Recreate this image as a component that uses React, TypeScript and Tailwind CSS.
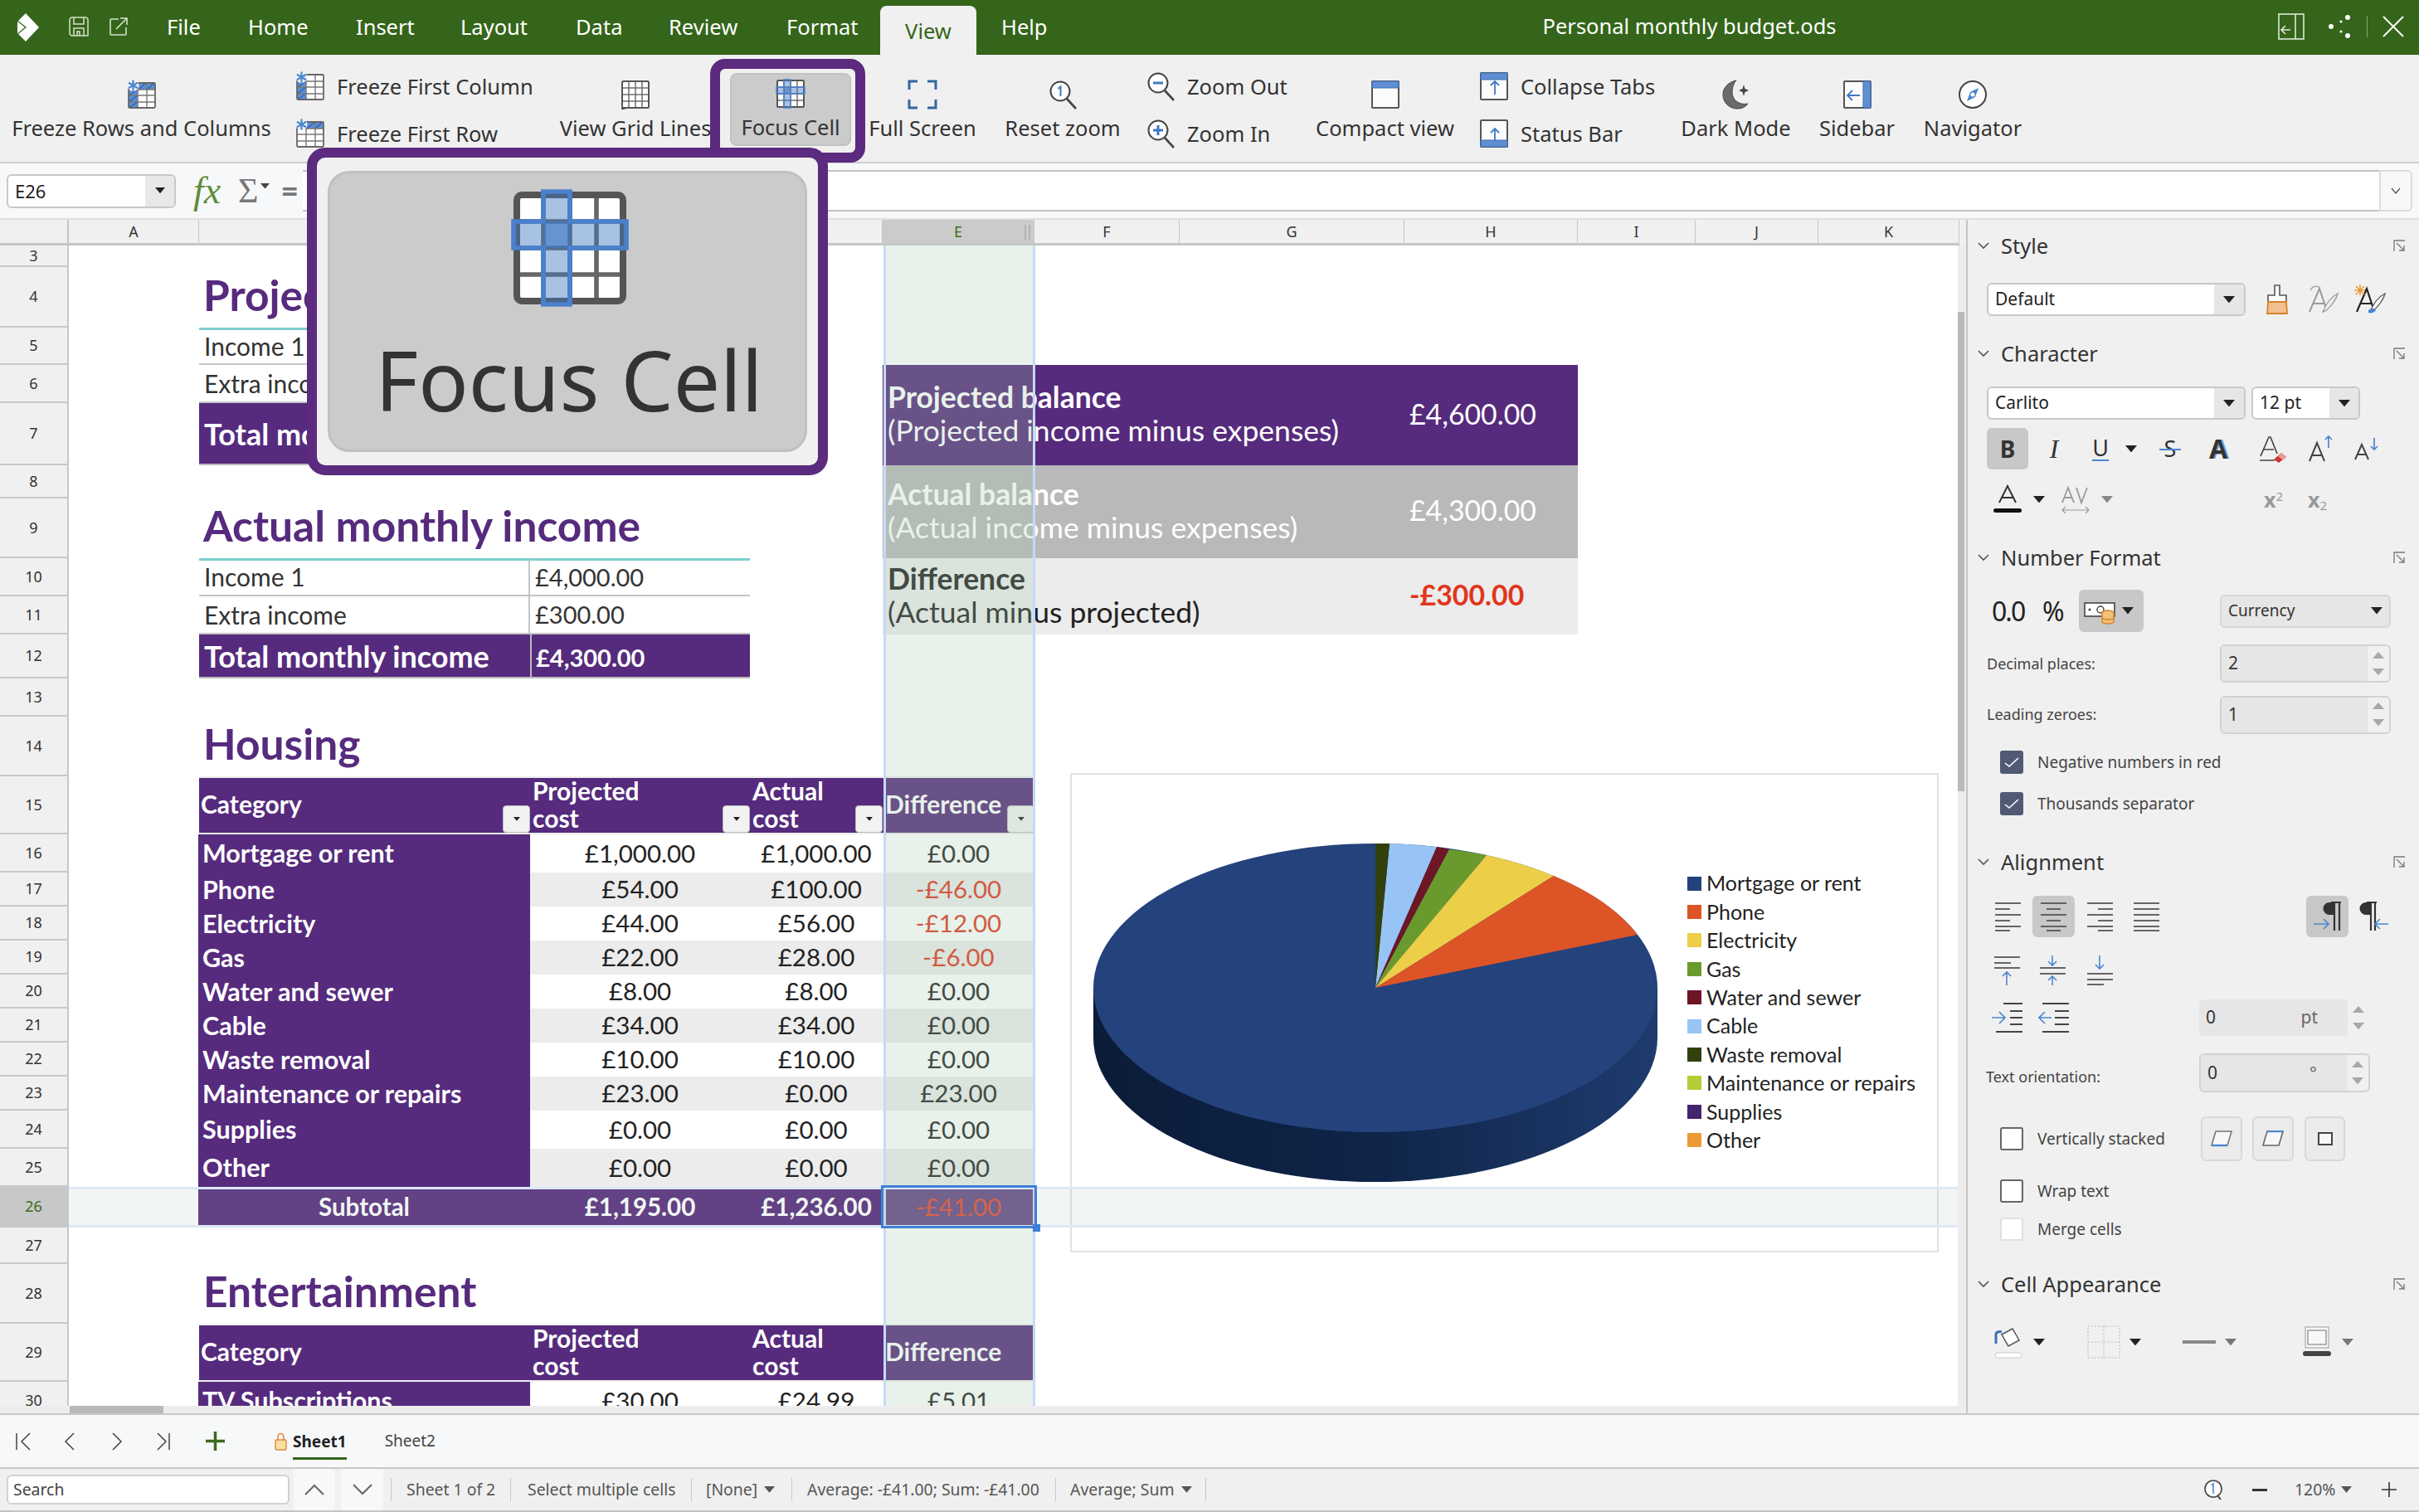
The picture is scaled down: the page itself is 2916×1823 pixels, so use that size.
import React from "react";

const PURPLE = "bg-[#562b7d]";

function Drop({ c = "#222", w = 14 }: { c?: string; w?: number }) {
  return (
    <svg width={w} height={w * 0.6} viewBox="0 0 14 8.4" className="shrink-0">
      <path d="M0 0h14L7 8.4z" fill={c} />
    </svg>
  );
}

function Grid({ focus, tail }: { focus?: boolean; tail?: boolean }) {
  return (
    <svg viewBox="0 0 36 36" className="w-full h-full">
      <rect x="2" y="2" width="32" height="32" rx="1.5" fill="#fff" />
      {[10, 18, 26].map((p) => (
        <React.Fragment key={p}>
          <line x1={p} y1="2" x2={p} y2="34" stroke="#666" strokeWidth="1.4" />
          <line x1="2" y1={p} x2="34" y2={p} stroke="#666" strokeWidth="1.4" />
        </React.Fragment>
      ))}
      <rect x="2" y="2" width="32" height="32" rx="1.5" fill="none" stroke="#555" strokeWidth="2" />
      {focus && (
        <>
          <rect x="1" y="10" width="34" height="8" fill="#3f78c4" opacity="0.45" />
          <rect x="10" y="1" width="8" height="9" fill="#3f78c4" opacity="0.45" />
          <rect x="10" y="18" width="8" height="17" fill="#3f78c4" opacity="0.45" />
          <rect x="10" y="10" width="8" height="8" fill="#3f78c4" opacity="0.62" />
          <path d="M10 1h8v9h17v8H18v17h-8V18H1v-8h9z" fill="none" stroke="#4a80cc" strokeWidth="1.4" />
        </>
      )}
      {tail && <path d="M2 34v2l4-2" fill="none" stroke="#555" strokeWidth="2" />}
    </svg>
  );
}

function Freeze({ row, col }: { row?: boolean; col?: boolean }) {
  return (
    <svg viewBox="0 0 36 36" className="w-full h-full">
      <rect x="2" y="4" width="32" height="30" rx="1.5" fill="#fff" />
      {col && (
        <>
          <rect x="2" y="12" width="11" height="22" fill="#5b8ed6" />
          <path d="M2 19l11-7M2 27l11-8M2 34l11-7" stroke="#2c5fae" strokeWidth="1.2" />
        </>
      )}
      {row && (
        <>
          <rect x="13" y="4" width="21" height="8" fill="#5b8ed6" />
          <path d="M14 12l9-8M24 12l9-8" stroke="#2c5fae" strokeWidth="1.2" />
        </>
      )}
      <path d="M13 4v30M24 4v30M2 12h32M2 19h32M2 27h32" stroke="#777" strokeWidth="1.4" fill="none" />
      <rect x="2" y="4" width="32" height="30" rx="1.5" fill="none" stroke="#666" strokeWidth="1.8" />
      <circle cx="7.500" cy="7" r="7" fill="#f0f0f0" />
      <path d="M7.500 0.500v13M2 3.800l11 6.400M13 3.800L2 10.200" stroke="#4a86d0" strokeWidth="2.2" />
    </svg>
  );
}

function Mag({ mark }: { mark: "1" | "+" | "-" }) {
  return (
    <svg viewBox="0 0 36 36" className="w-full h-full">
      <circle cx="15" cy="14" r="11.5" fill="#fff" stroke="#444" strokeWidth="2" />
      <path d="M23 23l11 12" stroke="#444" strokeWidth="2.6" />
      {mark === "1" && <path d="M12.5 11l3-2.5V20" fill="none" stroke="#3f78c4" strokeWidth="2" />}
      {mark === "+" && <path d="M9 14h12M15 8v12" stroke="#3f78c4" strokeWidth="3" />}
      {mark === "-" && <path d="M9 14h12" stroke="#3f78c4" strokeWidth="3" />}
    </svg>
  );
}

function Win({ band, arrow }: { band: "top" | "bottom" | "right"; arrow: "up" | "left" | "none" }) {
  return (
    <svg viewBox="0 0 36 36" className="w-full h-full">
      <rect x="2" y="2" width="32" height="32" rx="1" fill="#fbfbfb" stroke="#555" strokeWidth="2" />
      {band === "top" && <rect x="2" y="2" width="32" height="8" fill="#5f8fd2" stroke="#3f6fb4" />}
      {band === "bottom" && <rect x="2" y="26" width="32" height="8" fill="#5f8fd2" stroke="#3f6fb4" />}
      {band === "right" && <rect x="25" y="2" width="9" height="32" fill="#5f8fd2" stroke="#3f6fb4" />}
      {arrow === "up" && <path d="M19 28V12M14 17l5-5 5 5" fill="none" stroke="#3f78c4" strokeWidth="1.8" />}
      {arrow === "left" && <path d="M21 19H7M12 13l-6 6 6 6" fill="none" stroke="#3f78c4" strokeWidth="1.8" />}
    </svg>
  );
}

function Icon36({ children }: { children: React.ReactNode }) {
  return <div className="w-[36px] h-[36px] shrink-0">{children}</div>;
}

function Big({ w, ml, label, children }: { w: string; ml: string; label: string; children: React.ReactNode }) {
  return (
    <div className={`${w} ${ml} pt-[30px] flex flex-col items-center shrink-0`}>
      <Icon36>{children}</Icon36>
      <div className="mt-[8px] h-[28px] leading-[28px] text-[25.5px] text-[#333] whitespace-nowrap">{label}</div>
    </div>
  );
}

function Small({ label, children }: { label: string; children: React.ReactNode }) {
  return (
    <div className="flex items-center h-[34px]">
      <Icon36>{children}</Icon36>
      <span className="ml-[14px] text-[25.5px] text-[#333] whitespace-nowrap">{label}</span>
    </div>
  );
}

function TitleBar() {
  const menu = [
    ["File", "w-[40px] ml-[47px]"],
    ["Home", "w-[72px] ml-[58px]"],
    ["Insert", "w-[68px] ml-[58px]"],
    ["Layout", "w-[81px] ml-[58px]"],
    ["Data", "w-[54px] ml-[58px]"],
    ["Review", "w-[84px] ml-[58px]"],
    ["Format", "w-[85px] ml-[58px]"],
  ];
  return (
    <div className="h-[66px] shrink-0 bg-[#35651a] border-b border-[#2c5c12] flex items-stretch relative text-white">
      <div className="pl-[21px] flex items-center">
        <svg width="26" height="34" viewBox="0 0 26 34" className="shrink-0">
          <path d="M10 0l16 17-16 17L0 24V10z" fill="#fff" />
          <path d="M0 9l10 8L0 25" fill="none" stroke="#35651a" strokeWidth="1.3" />
        </svg>
        <svg width="24" height="24" viewBox="0 0 24 24" className="ml-[36px] -mt-[2px] shrink-0">
          <path d="M3 1h18l2 2v20H3l-2-2V3z" fill="none" stroke="#d3e2ca" strokeWidth="1.5" />
          <path d="M6 1v8h12V1M6 23v-9h12v9M10 23v-5h3v5" fill="none" stroke="#d3e2ca" strokeWidth="1.5" />
        </svg>
        <svg width="22" height="22" viewBox="0 0 22 22" className="ml-[25px] -mt-[2px] shrink-0">
          <path d="M11 2H2a1 1 0 0 0-1 1v17a1 1 0 0 0 1 1h17a1 1 0 0 0 1-1v-8" fill="none" stroke="#d3e2ca" strokeWidth="1.6" />
          <path d="M8 14L20 2M13 1h8v8" fill="none" stroke="#d3e2ca" strokeWidth="1.6" />
        </svg>
      </div>
      {menu.map(([t, c]) => (
        <div key={t} className={`${c} flex items-center text-[25.5px] whitespace-nowrap`}>{t}</div>
      ))}
      <div className="ml-[28px] w-[116px] mt-[7px] h-[60px] bg-[#f0f0f0] rounded-t-lg flex items-center justify-center text-[25.5px] text-[#35651a]">View</div>
      <div className="ml-[30px] flex items-center text-[25.5px]">Help</div>
      <div className="ml-[597px] flex items-center -mt-[2px] text-[25.5px] whitespace-nowrap">Personal monthly budget.ods</div>
      <div className="ml-auto flex items-center pr-[18px] -mt-[2px]">
        <svg width="32" height="32" viewBox="0 0 32 32">
          <rect x="1" y="1" width="30" height="30" fill="none" stroke="#dfe9d9" strokeWidth="1.6" />
          <path d="M21 1v30M15 20H5M9 15l-5 5 5 5" fill="none" stroke="#dfe9d9" strokeWidth="1.6" />
        </svg>
        <svg width="28" height="30" viewBox="0 0 28 30" className="ml-[28px]">
          <circle cx="24" cy="4" r="3" fill="#fff" />
          <circle cx="4" cy="15" r="3" fill="#fff" />
          <circle cx="24" cy="26" r="3" fill="#fff" />
          <circle cx="16" cy="9" r="1.6" fill="#fff" />
          <circle cx="16" cy="21" r="1.6" fill="#fff" />
        </svg>
        <div className="ml-[19px] w-px h-[26px] bg-[#88a878]" />
        <svg width="26" height="26" viewBox="0 0 26 26" className="ml-[18px]">
          <path d="M1 1l24 24M25 1L1 25" stroke="#fff" strokeWidth="1.8" />
        </svg>
      </div>
    </div>
  );
}

function Ribbon() {
  return (
    <div className="h-[131px] shrink-0 bg-[#f0f0f0] border-b-2 border-[#cfcfcf] flex">
      <Big w="w-[315px]" ml="ml-[13px]" label="Freeze Rows and Columns"><Freeze row col /></Big>
      <div className="ml-[28px] w-[287px] shrink-0 pt-[21px] flex flex-col gap-[23px]">
        <Small label="Freeze First Column"><Freeze col /></Small>
        <Small label="Freeze First Row"><Freeze row /></Small>
      </div>
      <Big w="w-[184px]" ml="ml-[31px]" label="View Grid Lines"><Grid tail /></Big>
      <div className="ml-[22px] mt-[22px] w-[146px] h-[88px] shrink-0 bg-[#cbcbcb] rounded-lg border-2 border-[#c2c2c2] pt-[5px] flex flex-col items-center">
        <Icon36><Grid focus /></Icon36>
        <div className="mt-[8px] text-[25.5px] leading-[28px] text-[#333] whitespace-nowrap">Focus Cell</div>
      </div>
      <Big w="w-[128px]" ml="ml-[22px]" label="Full Screen">
        <svg viewBox="0 0 36 36" className="w-full h-full">
          <path d="M2 12V2h10M24 2h10v10M34 24v10H24M12 34H2V24" fill="none" stroke="#33679f" strokeWidth="3" />
        </svg>
      </Big>
      <Big w="w-[138px]" ml="ml-[36px]" label="Reset zoom"><Mag mark="1" /></Big>
      <div className="ml-[31px] w-[172px] shrink-0 pt-[21px] flex flex-col gap-[23px]">
        <Small label="Zoom Out"><Mag mark="-" /></Small>
        <Small label="Zoom In"><Mag mark="+" /></Small>
      </div>
      <Big w="w-[171px]" ml="ml-[31px]" label="Compact view"><Win band="top" arrow="none" /></Big>
      <div className="ml-[28px] w-[211px] shrink-0 pt-[21px] flex flex-col gap-[23px]">
        <Small label="Collapse Tabs"><Win band="top" arrow="up" /></Small>
        <Small label="Status Bar"><Win band="bottom" arrow="up" /></Small>
      </div>
      <Big w="w-[133px]" ml="ml-[32px]" label="Dark Mode">
        <svg viewBox="0 0 36 36" className="w-full h-full">
          <path d="M18 1C8 3 2 10 2 18c0 10 8 17 17 17 6 0 10-2 13-6-9 2-19-3-19-14 0-6 2-11 5-14z" fill="#6b6b6b" stroke="#444" strokeWidth="1" />
          <path d="M27 6l1.5 5L33 13l-4.500 2L27 20l-1.500-5L21 13l4.500-2z" fill="#444" />
        </svg>
      </Big>
      <Big w="w-[91px]" ml="ml-[34px]" label="Sidebar"><Win band="right" arrow="left" /></Big>
      <Big w="w-[118px]" ml="ml-[35px]" label="Navigator">
        <svg viewBox="0 0 36 36" className="w-full h-full">
          <circle cx="18" cy="18" r="16" fill="#fff" stroke="#444" strokeWidth="2" />
          <path d="M25 10l-4 11-10 5 4-11z" fill="#4a86d0" />
          <circle cx="18" cy="18" r="2.500" fill="#fff" />
        </svg>
      </Big>
    </div>
  );
}

function FormulaBar() {
  return (
    <div className="h-[68px] shrink-0 bg-[#f7f8f9] border-b-2 border-[#e0e0e0] flex items-center relative">
      <div className="ml-[8px] w-[204px] h-[41px] rounded-md border-2 border-[#c8c8c8] bg-white flex items-stretch overflow-hidden">
        <div className="flex-1 pl-[8px] flex items-center text-[22px] text-[#222]">E26</div>
        <div className="w-[35px] bg-[#e8e8e8] flex items-center justify-center"><Drop w={12} /></div>
      </div>
      <div className="ml-[21px] w-[40px] [font-family:'Liberation_Serif',serif] italic text-[46px] leading-none text-[#5d8c3c]">fx</div>
      <div className="ml-[14px] [font-family:'Liberation_Serif',serif] text-[42px] leading-none text-[#777]">Σ</div>
      <div className="ml-[3px] -mt-[12px]"><Drop w={11} c="#444" /></div>
      <div className="ml-[14px] text-[34px] leading-none font-bold text-[#777]">=</div>
      <div className="ml-[6px] flex-1 h-[50px] bg-white border-y-2 border-[#c4c4c4]" />
      <div className="w-[40px] h-[50px] bg-[#f7f8f9] border-2 border-l-2 border-[#dcdcdc] rounded-r-md flex items-center justify-center mr-[8px]">
        <svg width="12" height="8" viewBox="0 0 12 8"><path d="M1 1l5 6 5-6" fill="none" stroke="#555" strokeWidth="1.3" /></svg>
      </div>
    </div>
  );
}

const GRIDCOLS = "grid grid-cols-[83px_157px_399px_265px_160px_183px_175px_271px_209px_142px_148px_170px]";

function ColHeaders() {
  const cols = ["A", "B", "C", "D", "E", "F", "G", "H", "I", "J", "K"];
  return (
    <div className={`${GRIDCOLS} h-[31px] shrink-0 text-[18px] text-[#333] bg-[#f0f0f0]`}>
      <div className="border-r-2 border-b-[3px] border-[#c4c4c4]" />
      {cols.map((c) => (
        <div
          key={c}
          className={`relative flex items-center justify-center border-r border-b-[3px] border-[#c6c6c6] ${c === "E" ? "bg-[#cbcbcb] text-[#3c6a1c]" : ""}`}
        >
          {c}
          {c === "E" && <div className="absolute right-[4px] top-[6px] h-[18px] w-[7px] border-x-2 border-[#b4b4b4]" />}
        </div>
      ))}
    </div>
  );
}

const HEIGHTS = "grid-rows-[26px_73px_45px_46px_75px_40px_72px_46px_46px_53px_46px_72px_70px_46px_41px_41px_41px_41px_41px_41px_41px_46px_46px_49px_44px_72px_70px_46px]";

const HOUSING: string[][] = [
  ["Mortgage or rent", "£1,000.00", "£1,000.00", "£0.00"],
  ["Phone", "£54.00", "£100.00", "-£46.00"],
  ["Electricity", "£44.00", "£56.00", "-£12.00"],
  ["Gas", "£22.00", "£28.00", "-£6.00"],
  ["Water and sewer", "£8.00", "£8.00", "£0.00"],
  ["Cable", "£34.00", "£34.00", "£0.00"],
  ["Waste removal", "£10.00", "£10.00", "£0.00"],
  ["Maintenance or repairs", "£23.00", "£0.00", "£23.00"],
  ["Supplies", "£0.00", "£0.00", "£0.00"],
  ["Other", "£0.00", "£0.00", "£0.00"],
];

function Filter() {
  return (
    <div className="absolute right-0 bottom-0 w-[33px] h-[33px] bg-[#f2f2f2] border border-[#bbb] rounded-sm flex items-center justify-center">
      <Drop w={8} c="#222" />
    </div>
  );
}

function HeaderRow({ n, filters }: { n: number; filters?: boolean }) {
  const gridRow = n - 2;
  const hc = "text-white font-bold text-[30px] leading-[33px] flex items-center relative border-y-2 border-[#eeeeee] pb-[3px]";
  return (
    <>
      <div style={{ gridRow }} className={`col-start-3 ${PURPLE} ${hc} pl-[2px]`}>Category{filters && <Filter />}</div>
      <div style={{ gridRow }} className={`col-start-4 ${PURPLE} ${hc} pl-[3px]`}><span>Projected<br />cost</span>{filters && <Filter />}</div>
      <div style={{ gridRow }} className={`col-start-5 ${PURPLE} ${hc} pl-[3px]`}><span>Actual<br />cost</span>{filters && <Filter />}</div>
      <div style={{ gridRow }} className={`col-start-6 ${PURPLE} ${hc} pl-[3px]`}>Difference{filters && <Filter />}</div>
    </>
  );
}

function DataRow({ n, r, idx }: { n: number; r: string[]; idx: number }) {
  const gridRow = n - 2;
  const bg = idx % 2 === 1 ? "bg-[#ececec]" : "bg-white";
  const neg = r[3].startsWith("-");
  return (
    <>
      <div style={{ gridRow }} className={`col-start-3 ${PURPLE} -ml-[1px] pl-[5px] text-white font-bold text-[30.5px] flex items-center whitespace-nowrap`}>{r[0]}</div>
      <div style={{ gridRow }} className={`col-start-4 ${bg} text-[#222] text-[29.5px] flex items-center justify-center`}>{r[1]}</div>
      <div style={{ gridRow }} className={`col-start-5 ${bg} text-[#222] text-[29.5px] flex items-center justify-center`}>{r[2]}</div>
      <div style={{ gridRow }} className={`col-start-6 ${bg} ${neg ? "text-[#e0361c]" : "text-[#222]"} text-[29.5px] flex items-center justify-center`}>{r[3]}</div>
    </>
  );
}

function Title({ n, children }: { n: number; children: React.ReactNode }) {
  return (
    <div style={{ gridRow: n - 2 }} className="col-start-3 col-end-6 pl-[5px] pb-[6px] text-[51.5px] font-bold text-[#562b7d] flex items-center whitespace-nowrap">
      {children}
    </div>
  );
}

function IncomeRows({ n, a, b, c }: { n: number; a: string; b: string; c: string }) {
  return (
    <>
      <div style={{ gridRow: n - 2 }} className="col-start-3 border-t-[3px] border-b-2 border-t-[#7dcfce] border-b-[#c4c4c4] border-r-2 border-r-[#c4c4c4] pl-[6px] pb-[2px] flex items-center text-[30px] text-[#333]">Income 1</div>
      <div style={{ gridRow: n - 2 }} className="col-start-4 border-t-[3px] border-b-2 border-t-[#7dcfce] border-b-[#c4c4c4] pl-[6px] pb-[2px] flex items-center text-[29px] text-[#333]">{a}</div>
      <div style={{ gridRow: n - 1 }} className="col-start-3 border-b-2 border-[#c4c4c4] border-r-2 pl-[6px] flex items-center text-[30px] text-[#333]">Extra income</div>
      <div style={{ gridRow: n - 1 }} className="col-start-4 border-b-2 border-[#c4c4c4] pl-[6px] flex items-center text-[29px] text-[#333]">{b}</div>
      <div style={{ gridRow: n }} className={`col-start-3 ${PURPLE} border-b-2 border-[#bbb] pl-[6px] flex items-center text-[36px] font-bold text-white whitespace-nowrap`}>Total monthly income</div>
      <div style={{ gridRow: n }} className={`col-start-4 ${PURPLE} border-b-2 border-[#bbb] border-l-2 pl-[5px] pt-[4px] flex items-center text-[29px] font-bold text-white`}>{c}</div>
    </>
  );
}

function Balance({ row, bg, text, l1, l2, value, valueC }: { row: string; bg: string; text: string; l1: string; l2: string; value: string; valueC: string }) {
  return (
    <>
      <div className={`${row} col-start-6 col-end-9 ${bg} ${text} pl-[6px] pb-[3px] flex items-center text-[35.5px] leading-[40px] whitespace-nowrap`}>
        <span><b>{l1}</b><br />{l2}</span>
      </div>
      <div className={`${row} col-start-9 ${bg} ${valueC} pl-[6px] pb-[3px] flex items-center text-[33.8px]`}>{value}</div>
    </>
  );
}

const LEGEND: [string, string][] = [
  ["Mortgage or rent", "bg-[#24427c]"],
  ["Phone", "bg-[#dd5427]"],
  ["Electricity", "bg-[#ecce48]"],
  ["Gas", "bg-[#6a9a2e]"],
  ["Water and sewer", "bg-[#6e1626]"],
  ["Cable", "bg-[#97c4f5]"],
  ["Waste removal", "bg-[#32400e]"],
  ["Maintenance or repairs", "bg-[#b5cc35]"],
  ["Supplies", "bg-[#43246e]"],
  ["Other", "bg-[#ec9a35]"],
];

function Chart() {
  const cx = 366, cy = 257, rx = 340, ry = 174;
  const arc = (a: number[], b: number[]) => `M${cx} ${cy}L${a[0]} ${a[1]}A${rx} ${ry} 0 0 1 ${b[0]} ${b[1]}Z`;
  return (
    <div className="absolute left-[1290px] top-[636px] w-[1047px] h-[578px] bg-white border-2 border-[#e2e2e2] flex">
      <svg width="742" height="574" viewBox="0 0 742 574" className="shrink-0">
        <defs>
          <linearGradient id="side" x1="0" x2="1" y1="0" y2="0">
            <stop offset="0" stopColor="#0b1c38" />
            <stop offset="0.5" stopColor="#0f2448" />
            <stop offset="1" stopColor="#1f3b6e" />
          </linearGradient>
        </defs>
        <path d={`M26 257v60A340 174 0 0 0 706 317v-60z`} fill="url(#side)" />
        <ellipse cx={cx} cy={cy} rx={rx} ry={ry} fill="#24427c" />
        <path d={arc([383, 83], [440, 87])} fill="#97c4f5" />
        <path d={arc([440, 87], [455, 90])} fill="#6e1626" />
        <path d={arc([455, 90], [500, 97])} fill="#6a9a2e" />
        <path d={arc([500, 97], [581, 122])} fill="#ecce48" />
        <path d={arc([581, 122], [682, 193])} fill="#dd5427" />
        <path d={arc([366, 83], [383, 83])} fill="#32400e" />
      </svg>
      <div className="mt-[114px] flex flex-col">
        {LEGEND.map(([t, c]) => (
          <div key={t} className="h-[34.4px] flex items-center text-[25px] text-[#222] whitespace-nowrap">
            <span className={`${c} w-[17px] h-[17px] mr-[6px] shrink-0`} />
            {t}
          </div>
        ))}
      </div>
    </div>
  );
}

function SheetBody() {
  const rowNums = Array.from({ length: 28 }, (_, i) => i + 3);
  return (
    <div className="relative flex-1 min-h-0 overflow-hidden bg-white [font-family:Lato,sans-serif]">
      <div className={`${GRIDCOLS} ${HEIGHTS}`}>
        {rowNums.map((n) => (
          <div
            key={n}
            style={{ gridRow: n - 2 }}
            className={`col-start-1 border-r-2 border-b-2 border-[#c8c8c8] flex items-center justify-center text-[18px] [font-family:'Noto_Sans',sans-serif] ${n === 26 ? "bg-[#c8c8c8] text-[#3c6a1c]" : "bg-[#f0f0f0] text-[#333]"}`}
          >
            {n}
          </div>
        ))}

        <Title n={4}>Projected monthly income</Title>
        <IncomeRows n={5} a="£4,000.00" b="£600.00" c="£4,600.00" />
        <Title n={9}>Actual monthly income</Title>
        <IncomeRows n={10} a="£4,000.00" b="£300.00" c="£4,300.00" />

        <Balance row="row-start-4 row-end-6" bg={PURPLE} text="text-white" l1="Projected balance" l2="(Projected income minus expenses)" value="£4,600.00" valueC="text-white" />
        <Balance row="row-start-6 row-end-8" bg="bg-[#b9b9b9]" text="text-white" l1="Actual balance" l2="(Actual income minus expenses)" value="£4,300.00" valueC="text-white" />
        <Balance row="row-start-8 row-end-10" bg="bg-[#ececec]" text="text-[#222]" l1="Difference" l2="(Actual minus projected)" value="-£300.00" valueC="text-[#e0361c] font-bold" />

        <Title n={14}>Housing</Title>
        <HeaderRow n={15} filters />
        {HOUSING.map((r, i) => (
          <DataRow key={r[0]} n={16 + i} r={r} idx={i} />
        ))}
        <div style={{ gridRow: 24 }} className={`col-start-3 ${PURPLE} -ml-[1px] text-white font-bold text-[29.5px] flex items-center justify-center`}>Subtotal</div>
        <div style={{ gridRow: 24 }} className={`col-start-4 ${PURPLE} text-white font-bold text-[29.5px] flex items-center justify-center`}>£1,195.00</div>
        <div style={{ gridRow: 24 }} className={`col-start-5 ${PURPLE} text-white font-bold text-[29.5px] flex items-center justify-center`}>£1,236.00</div>
        <div style={{ gridRow: 24 }} className={`col-start-6 ${PURPLE} text-[#ee2f14] text-[29.5px] flex items-center justify-center`}>-£41.00</div>

        <Title n={28}>Entertainment</Title>
        <HeaderRow n={29} />
        <DataRow n={30} r={["TV Subscriptions", "£30.00", "£24.99", "£5.01"]} idx={0} />
      </div>

      <Chart />

      <div className="absolute left-[1065px] top-0 bottom-0 w-[183px] bg-[rgba(163,199,171,0.25)] border-x-[3px] border-[#c6daf6]" />
      <div className="absolute left-[83px] right-0 top-[1135px] h-[49px] bg-[rgba(168,195,175,0.15)] border-y-[3px] border-[#dde8f8]" />
      <div className="absolute left-[1062px] top-[1133px] w-[188px] h-[52px] border-[3px] border-[#3f7fd8]" />
      <div className="absolute left-[1245px] top-[1180px] w-[9px] h-[9px] bg-[#3f7fd8]" />
    </div>
  );
}

function SheetArea() {
  return (
    <div className="w-[2370px] shrink-0 flex flex-col overflow-hidden">
      <ColHeaders />
      <div className="flex-1 min-h-0 flex">
        <SheetBody />
        <div className="w-[10px] shrink-0 bg-[#ededed] pt-[80px]">
          <div className="w-[8px] h-[578px] bg-[#b8bab8]" />
        </div>
      </div>
      <div className="h-[9px] shrink-0 bg-[#ededed] pl-[84px]">
        <div className="w-[113px] h-full bg-[#b8bab8]" />
      </div>
    </div>
  );
}

function SecTitle({ t, mt }: { t: string; mt: string }) {
  return (
    <div className={`${mt} h-[32px] flex items-center pl-[12px] pr-[16px]`}>
      <svg width="14" height="9" viewBox="0 0 14 9"><path d="M1 1l6 6 6-6" fill="none" stroke="#555" strokeWidth="1.6" /></svg>
      <span className="ml-[14px] text-[25.5px] text-[#333] whitespace-nowrap">{t}</span>
      <svg width="15" height="15" viewBox="0 0 15 15" className="ml-auto">
        <path d="M1 14V1h13M4 4l9 9M7 13h6V7" fill="none" stroke="#777" strokeWidth="1.3" />
      </svg>
    </div>
  );
}

function Combo({ w, t, btn }: { w: string; t: string; btn: string }) {
  return (
    <div className={`${w} h-[40px] bg-white border-2 border-[#c8c8c8] rounded-md flex overflow-hidden shrink-0`}>
      <div className="flex-1 pl-[8px] flex items-center text-[21px] text-[#222]">{t}</div>
      <div className={`${btn} bg-[#e6e6e6] flex items-center justify-center`}><Drop /></div>
    </div>
  );
}

function Spin({ w, h, v, unit, box, ml }: { w: string; h: string; v: string; unit?: string; box?: boolean; ml?: string }) {
  return (
    <div className={`${w} ${h} ${ml ?? ""} rounded-md flex overflow-hidden shrink-0 ${box ? "border-2 border-[#d2d2d2]" : ""}`}>
      <div className="flex-1 bg-[#e6e6e6] pl-[8px] pr-[36px] flex items-center justify-between text-[21px] text-[#333]">
        <span>{v}</span>
        {unit && <span className="text-[#666]">{unit}</span>}
      </div>
      <div className="w-[26px] flex flex-col items-center justify-center gap-[12px]">
        <svg width="14" height="8" viewBox="0 0 14 8"><path d="M0 8h14L7 0z" fill="#a8a8a8" /></svg>
        <Drop c="#a8a8a8" />
      </div>
    </div>
  );
}

function Check({ on, t, soft }: { on?: boolean; t: string; soft?: boolean }) {
  return (
    <div className="flex items-center">
      <div className={`ml-[39px] w-[28px] h-[28px] rounded-[3px] flex items-center justify-center shrink-0 ${on ? "bg-[#505a74]" : soft ? "bg-white border-2 border-[#e0e0e0]" : "bg-white border-2 border-[#666]"}`}>
        {on && <svg width="18" height="14" viewBox="0 0 18 14"><path d="M1 8l5 4L17 2" fill="none" stroke="#fff" strokeWidth="1.6" /></svg>}
      </div>
      <span className="ml-[17px] text-[19px] text-[#444] whitespace-nowrap">{t}</span>
    </div>
  );
}

function Lines({ rows, w = 31, arrow, cn }: { rows: number[][]; w?: number; arrow?: React.ReactNode; cn?: string }) {
  return (
    <svg width={w} height="36" viewBox={`0 0 ${w} 36`} className={`shrink-0 ${cn ?? ""}`}>
      {rows.map((r, i) => (
        <line key={i} x1={r[0]} x2={r[1]} y1={r[2]} y2={r[2]} stroke="#555" strokeWidth="1.8" />
      ))}
      {arrow}
    </svg>
  );
}

function TB({ ml, w = "w-[50px]", active, children }: { ml: string; w?: string; active?: boolean; children: React.ReactNode }) {
  return (
    <div className={`${ml} ${w} h-full shrink-0 rounded-md flex items-center justify-center ${active ? "bg-[#c8c8c8]" : ""}`}>
      {children}
    </div>
  );
}

function Sidebar() {
  const blue = "#4a86d0";
  return (
    <div className="flex-1 min-w-0 bg-[#f0f0f0] border-l-2 border-[#c4c4c4] flex flex-col">
      <SecTitle t="Style" mt="mt-[15px]" />
      <div className="mt-[29px] h-[40px] flex pl-[23px] items-center">
        <Combo w="w-[312px]" t="Default" btn="w-[36px]" />
        <svg width="26" height="38" viewBox="0 0 26 38" className="ml-[25px]">
          <path d="M10 2h6v12h8v8H2v-8h8z" fill="#fff" stroke="#555" strokeWidth="1.6" />
          <path d="M2 22h22l1 14H1z" fill="#f0c090" stroke="#d9822b" strokeWidth="1.8" />
        </svg>
        <svg width="38" height="38" viewBox="0 0 38 38" className="ml-[24px]">
          <path d="M2 34L14 6l8 24M6 24h14" fill="none" stroke="#999" strokeWidth="2" />
          <path d="M18 34c6-1 16-14 18-22-8 4-14 12-18 22z" fill="#eee" stroke="#999" strokeWidth="1.3" />
          <path d="M3 8c2-5 8-6 12-3" fill="none" stroke="#aaa" strokeWidth="1.4" />
        </svg>
        <svg width="40" height="38" viewBox="0 0 40 38" className="ml-[17px]">
          <path d="M4 34L16 6l8 24M8 24h14" fill="none" stroke="#222" strokeWidth="2.2" />
          <path d="M20 34c6-1 16-14 18-22-8 4-14 12-18 22z" fill="#fff" stroke="#555" strokeWidth="1.3" />
          <path d="M18 32c4-3 8-2 9 0-2 3-6 4-9 3z" fill={blue} />
          <path d="M8 1v13M1 8h13M3 3l10 10M13 3L3 13" stroke="#ea9a35" strokeWidth="1.5" />
        </svg>
      </div>
      <SecTitle t="Character" mt="mt-[29px]" />
      <div className="mt-[24px] h-[40px] flex pl-[23px]">
        <Combo w="w-[312px]" t="Carlito" btn="w-[36px]" />
        <div className="ml-[7px]"><Combo w="w-[131px]" t="12 pt" btn="w-[35px]" /></div>
      </div>
      <div className="mt-[10px] h-[50px] flex pl-[23px] items-center text-[#333]">
        <TB ml="" active><span className="text-[28px] font-bold">B</span></TB>
        <TB ml="ml-[6px]"><span className="[font-family:'Liberation_Serif',serif] italic text-[32px]">I</span></TB>
        <TB ml="ml-[6px]"><span className="text-[27px] border-b-2 border-[#4a86d0] leading-[28px]">U</span></TB>
        <div className="ml-[5px]"><Drop /></div>
        <TB ml="ml-[15px]"><span className="relative text-[27px]">S<span className="absolute left-[-6px] right-[-6px] top-[20px] h-[2px] bg-[#4a86d0]" /></span></TB>
        <TB ml="ml-[8px]"><span className="text-[32px] font-bold text-[#333] [text-shadow:2px_0_0_#6ea0dc]">A</span></TB>
        <TB ml="ml-[16px]">
          <svg width="34" height="34" viewBox="0 0 34 34">
            <path d="M2 26L12 3h2l8 20M6 18h12M1 31h18" fill="none" stroke="#444" strokeWidth="1.7" />
            <path d="M18 30l9-8 6 5-9 7z" fill="#c8372d" />
            <path d="M23 26l4-4 6 5-4 4z" fill="#e89a96" />
          </svg>
        </TB>
        <TB ml="ml-[8px]">
          <svg width="30" height="32" viewBox="0 0 30 32">
            <path d="M1 31L10 9l9 22M4 24h12" fill="none" stroke="#444" strokeWidth="2" />
            <path d="M24 15V1M20 5l4-4 4 4" fill="none" stroke={blue} strokeWidth="1.7" />
          </svg>
        </TB>
        <TB ml="ml-[5px]">
          <svg width="30" height="28" viewBox="0 0 30 28">
            <path d="M1 27L9 9l8 18M4 21h10" fill="none" stroke="#444" strokeWidth="2" />
            <path d="M24 1v14M20 11l4 4 4-4" fill="none" stroke={blue} strokeWidth="1.7" />
          </svg>
        </TB>
      </div>
      <div className="mt-[16px] h-[40px] flex items-center pl-[31px]">
        <svg width="34" height="36" viewBox="0 0 34 36"><path d="M7 22L17 2l10 20M10 16h14" fill="none" stroke="#333" strokeWidth="2" /><rect x="0" y="29" width="34" height="5" rx="2.500" fill="#111" /></svg>
        <div className="ml-[14px]"><Drop /></div>
        <svg width="34" height="34" viewBox="0 0 34 34" className="ml-[20px]">
          <path d="M1 21L8 3l7 18M3.500 15h9M18 3l6 18 7-18" fill="none" stroke="#999" strokeWidth="1.8" />
          <path d="M1 30h32M5 26l-4 4 4 4M29 26l4 4-4 4" fill="none" stroke="#999" strokeWidth="1.2" />
        </svg>
        <div className="ml-[14px]"><Drop c="#888" /></div>
        <span className="ml-[182px] text-[25px] font-bold text-[#999] leading-none">x<sup className="text-[15px] font-normal">2</sup></span>
        <span className="ml-[30px] text-[25px] font-bold text-[#999] leading-none">x<sub className="text-[15px] font-normal">2</sub></span>
      </div>
      <SecTitle t="Number Format" mt="mt-[34px]" />
      <div className="mt-[23px] h-[51px] flex items-center pl-[29px]">
        <span className="w-[37px] text-[32px] tracking-[-2px] text-[#222] leading-none">0.0</span>
        <span className="ml-[24px] w-[27px] text-[32px] text-[#222] leading-none">%</span>
        <div className="ml-[17px] w-[78px] h-[51px] rounded-md bg-[#c8c8c8] flex items-center pl-[6px]">
          <svg width="40" height="32" viewBox="0 0 40 32" className="shrink-0">
            <rect x="1" y="6" width="36" height="16" fill="#fff" stroke="#444" strokeWidth="1.6" />
            <circle cx="7" cy="14" r="1.500" fill="#444" />
            <circle cx="20" cy="14" r="4" fill="none" stroke="#444" strokeWidth="1.5" />
            <ellipse cx="29" cy="18" rx="7" ry="3" fill="#f0c27a" stroke="#d9822b" strokeWidth="1.5" />
            <path d="M22 18v10c0 4 14 4 14 0V18M22 23c0 4 14 4 14 0" fill="#f0c27a" stroke="#d9822b" strokeWidth="1.5" />
          </svg>
          <div className="ml-[6px]"><Drop /></div>
        </div>
        <div className="ml-[92px] w-[206px] h-[40px] bg-[#e6e6e6] border-2 border-[#d6d6d6] rounded-md flex items-center justify-between pl-[8px] pr-[8px] text-[19px] text-[#333]">
          <span>Currency</span><Drop />
        </div>
      </div>
      <div className="mt-[15px] h-[46px] flex items-center pl-[23px] text-[18px] text-[#444]">
        <span className="w-[281px]">Decimal places:</span>
        <Spin w="w-[206px]" h="h-[46px]" v="2" box />
      </div>
      <div className="mt-[15px] h-[47px] flex items-center pl-[23px] text-[18px] text-[#444]">
        <span className="w-[281px]">Leading zeroes:</span>
        <Spin w="w-[206px]" h="h-[46px]" v="1" box />
      </div>
      <div className="mt-[20px] h-[28px]"><Check on t="Negative numbers in red" /></div>
      <div className="mt-[22px] h-[28px]"><Check on t="Thousands separator" /></div>
      <SecTitle t="Alignment" mt="mt-[40px]" />
      <div className="mt-[25px] h-[50px] flex items-center pl-[23px]">
        <TB ml="ml-[0px]" w="w-[50px]"><Lines rows={[[0, 31, 2], [0, 18, 9], [0, 31, 16], [0, 18, 23], [0, 31, 30], [0, 18, 35]]} /></TB>
        <TB ml="ml-[5px]" w="w-[51px]" active><Lines rows={[[0, 31, 2], [7, 24, 9], [0, 31, 16], [7, 24, 23], [0, 31, 30], [7, 24, 35]]} /></TB>
        <TB ml="ml-[5px]" w="w-[50px]"><Lines rows={[[0, 31, 2], [13, 31, 9], [0, 31, 16], [13, 31, 23], [0, 31, 30], [13, 31, 35]]} /></TB>
        <TB ml="ml-[6px]" w="w-[50px]"><Lines rows={[[0, 31, 2], [0, 31, 9], [0, 31, 16], [0, 31, 23], [0, 31, 30], [0, 31, 35]]} /></TB>
        <TB ml="ml-[168px]" w="w-[51px]" active>
          <svg width="36" height="38" viewBox="0 0 36 38">
            <path d="M22 2h12M26 2v34M32 2v34" stroke="#333" strokeWidth="2.2" />
            <path d="M26 2h-6a7 7 0 0 0 0 15h6z" fill="#333" />
            <path d="M1 28h18M13 22l6 6-6 6" fill="none" stroke={blue} strokeWidth="1.6" />
          </svg>
        </TB>
        <TB ml="ml-[5px]" w="w-[51px]">
          <svg width="36" height="38" viewBox="0 0 36 38">
            <path d="M9 2h12M14 2v34M19 2v34" stroke="#333" strokeWidth="2.2" />
            <path d="M14 2H8a7 7 0 0 0 0 15h6z" fill="#333" />
            <path d="M35 28H19M25 22l-6 6 6 6" fill="none" stroke={blue} strokeWidth="1.6" />
          </svg>
        </TB>
      </div>
      <div className="mt-[21px] h-[37px] flex items-center pl-[32px]">
        <Lines rows={[[0, 31, 2], [0, 20, 9], [0, 31, 15]]} arrow={<path d="M15 36V20M10 25l5-5 5 5" fill="none" stroke={blue} strokeWidth="1.6" />} />
        <Lines cn="ml-[24px]" rows={[[0, 31, 15], [0, 31, 22]]} arrow={<path d="M15 0v12M10 7l5 5 5-5M15 36V25M10 30l5-5 5 5" fill="none" stroke={blue} strokeWidth="1.6" />} />
        <Lines cn="ml-[26px]" rows={[[0, 31, 22], [0, 31, 29], [0, 20, 35]]} arrow={<path d="M15 0v16M10 11l5 5 5-5" fill="none" stroke={blue} strokeWidth="1.6" />} />
      </div>
      <div className="mt-[17px] h-[44px] flex items-center pl-[29px]">
        <svg width="38" height="36" viewBox="0 0 38 36" className="shrink-0">
          <path d="M14 1h23M22 10h15M22 18h15M22 26h15M5 35h32" stroke="#444" strokeWidth="2" />
          <path d="M0 18h16M9 11l7 7-7 7" fill="none" stroke={blue} strokeWidth="1.7" />
        </svg>
        <svg width="38" height="36" viewBox="0 0 38 36" className="ml-[18px] shrink-0">
          <path d="M5 1h32M20 10h17M20 18h17M20 26h17M5 35h32" stroke="#444" strokeWidth="2" />
          <path d="M16 18H1M8 11l-7 7 7 7" fill="none" stroke={blue} strokeWidth="1.7" />
        </svg>
        <Spin w="w-[205px]" h="h-[44px]" v="0" unit="pt" ml="ml-[156px]" />
      </div>
      <div className="mt-[21px] h-[47px] flex items-center pl-[22px] text-[18px] text-[#444]">
        <span className="w-[257px] pt-[9px] whitespace-nowrap">Text orientation:</span>
        <Spin w="w-[206px]" h="h-[47px]" v="0" unit="°" box />
      </div>
      <div className="mt-[29px] h-[54px] flex items-center">
        <div className="w-[281px]"><Check t="Vertically stacked" /></div>
        <div className="w-[50px] h-[54px] bg-[#ebebeb] border-2 border-[#d8d8d8] rounded-md flex items-center justify-center">
          <svg width="26" height="20" viewBox="0 0 26 20"><path d="M6 1h19l-5 17H1z" fill="#f7f7f7" stroke="#777" strokeWidth="1.6" /><path d="M1 18h19" stroke={blue} strokeWidth="2.4" /></svg>
        </div>
        <div className="ml-[12px] w-[50px] h-[54px] bg-[#ebebeb] border-2 border-[#d8d8d8] rounded-md flex items-center justify-center">
          <svg width="26" height="20" viewBox="0 0 26 20"><path d="M6 1h19l-5 17H1z" fill="#f7f7f7" stroke="#666" strokeWidth="1.6" /><path d="M6 1h19" stroke={blue} strokeWidth="2.4" /></svg>
        </div>
        <div className="ml-[13px] w-[49px] h-[54px] bg-[#ebebeb] border-2 border-[#d8d8d8] rounded-md flex items-center justify-center">
          <div className="w-[18px] h-[16px] bg-[#f7f7f7] border-2 border-[#444]" />
        </div>
      </div>
      <div className="mt-[22px] h-[28px]"><Check t="Wrap text" /></div>
      <div className="mt-[18px] h-[28px]"><Check t="Merge cells" soft /></div>
      <SecTitle t="Cell Appearance" mt="mt-[36px]" />
      <div className="mt-[34px] h-[40px] flex items-center pl-[32px]">
        <svg width="34" height="40" viewBox="0 0 34 40" className="shrink-0">
          <path d="M9 11L22 4l8 14-13 7z" fill="#fff" stroke="#555" strokeWidth="1.5" />
          <path d="M2 22V11c0-3 4-4 7-3" fill="none" stroke="#3f6fb4" strokeWidth="3" />
          <rect x="1" y="33" width="32" height="6" rx="3" fill="#fff" stroke="#ccc" />
        </svg>
        <div className="ml-[13px]"><Drop /></div>
        <svg width="40" height="40" viewBox="0 0 40 40" className="ml-[51px] shrink-0">
          <path d="M1 1h38v38H1zM20 1v38M1 20h38" fill="none" stroke="#bbb" strokeWidth="1" strokeDasharray="2 2" />
        </svg>
        <div className="ml-[11px]"><Drop /></div>
        <div className="ml-[50px] w-[40px] h-[4px] bg-[#888]" />
        <div className="ml-[11px]"><Drop c="#777" /></div>
        <svg width="34" height="40" viewBox="0 0 34 40" className="ml-[80px] shrink-0">
          <rect x="3" y="2" width="28" height="25" fill="#f7f7f7" stroke="#aaa" strokeWidth="1.200" />
          <rect x="6" y="6" width="22" height="17" fill="#f7f7f7" stroke="#888" strokeWidth="1.200" />
          <rect x="0" y="31" width="34" height="6" rx="3" fill="#444" />
        </svg>
        <div className="ml-[13px]"><Drop c="#777" /></div>
      </div>
    </div>
  );
}

function TabsBar() {
  const sw = "fill-none stroke-[#444] stroke-[1.5]";
  return (
    <div className="h-[67px] shrink-0 bg-[#f7f8f9] border-y-2 border-[#c8c8c8] flex items-center text-[19px]">
      <svg width="20" height="22" viewBox="0 0 20 22" className={`ml-[19px] ${sw}`}><path d="M1 1v20M17 1L7 11l10 10" /></svg>
      <svg width="14" height="22" viewBox="0 0 14 22" className={`ml-[38px] ${sw}`}><path d="M12 1L2 11l10 10" /></svg>
      <svg width="14" height="22" viewBox="0 0 14 22" className={`ml-[43px] ${sw}`}><path d="M2 1l10 10L2 21" /></svg>
      <svg width="16" height="22" viewBox="0 0 16 22" className={`ml-[41px] ${sw}`}><path d="M1 1l10 10L1 21M15 1v20" /></svg>
      <svg width="23" height="23" viewBox="0 0 23 23" className="ml-[43px]"><path d="M11.500 0v23M0 11.500h23" stroke="#3c6a1c" strokeWidth="3.500" /></svg>
      <svg width="15" height="22" viewBox="0 0 15 22" className="ml-[60px]">
        <path d="M4 10V5a3.500 3.500 0 0 1 7 0v5" fill="none" stroke="#e08a3a" strokeWidth="1.6" />
        <rect x="1" y="9" width="13" height="12" rx="1.500" fill="#f7dfa0" stroke="#e08a3a" strokeWidth="1.4" />
      </svg>
      <div className="ml-[7px] relative font-bold text-[#222] h-[28px] leading-[28px]">
        Sheet1
        <div className="absolute left-0 right-0 -bottom-[8px] h-[3px] bg-[#35651a]" />
      </div>
      <div className="ml-[46px] text-[#444]">Sheet2</div>
    </div>
  );
}

function StatusBar() {
  const S = () => <div className="w-px h-[28px] bg-[#c8c8c8] shrink-0" />;
  return (
    <div className="h-[52px] shrink-0 bg-[#f0f0f0] border-b-2 border-[#c4c4c4] flex items-center text-[19.4px] text-[#555] whitespace-nowrap">
      <div className="ml-[8px] w-[341px] h-[36px] bg-white border-2 border-[#d2d2d2] rounded-md pl-[6px] flex items-center text-[#444]">Search</div>
      <div className="ml-[5px] w-[50px] h-full bg-[#f8f8f8] rounded-t flex items-center justify-center">
        <svg width="24" height="14" viewBox="0 0 24 14"><path d="M1 13L12 2l11 11" fill="none" stroke="#666" strokeWidth="2" /></svg>
      </div>
      <div className="ml-[7px] w-[51px] h-full bg-[#f8f8f8] rounded-t flex items-center justify-center">
        <svg width="24" height="14" viewBox="0 0 24 14"><path d="M1 1l11 11L23 1" fill="none" stroke="#666" strokeWidth="2" /></svg>
      </div>
      <div className="ml-[9px]"><S /></div>
      <span className="ml-[18px] w-[108px]">Sheet 1 of 2</span>
      <div className="ml-[17px]"><S /></div>
      <span className="ml-[20px] w-[177px]">Select multiple cells</span>
      <div className="ml-[20px]"><S /></div>
      <span className="ml-[17px] w-[60px]">[None]</span>
      <div className="ml-[10px]"><Drop w={13} c="#555" /></div>
      <div className="ml-[20px]"><S /></div>
      <span className="ml-[18px] w-[280px]">Average: -£41.00; Sum: -£41.00</span>
      <div className="ml-[19px]"><S /></div>
      <span className="ml-[17px] w-[123px]">Average; Sum</span>
      <div className="ml-[11px]"><Drop w={13} c="#555" /></div>
      <div className="ml-[16px]"><S /></div>
      <svg width="24" height="26" viewBox="0 0 24 26" className="ml-[1202px]">
        <circle cx="12" cy="12" r="10" fill="#fff" stroke="#444" strokeWidth="1.6" />
        <path d="M17 20l4 5" stroke="#444" strokeWidth="2" />
        <path d="M10 8l2-2v12" fill="none" stroke="#4a86d0" strokeWidth="1.6" />
      </svg>
      <div className="ml-[35px] w-[18px] h-[3px] bg-[#333]" />
      <span className="ml-[33px] w-[48px]">120%</span>
      <div className="ml-[8px]"><Drop w={13} c="#555" /></div>
      <svg width="18" height="18" viewBox="0 0 18 18" className="ml-[36px]"><path d="M9 0v18M0 9h18" stroke="#333" strokeWidth="1.6" /></svg>
    </div>
  );
}

export default function App() {
  return (
    <div className="relative w-[2916px] h-[1823px] overflow-hidden flex flex-col bg-white [font-family:'Noto_Sans',sans-serif]">
      <TitleBar />
      <Ribbon />
      <FormulaBar />
      <div className="flex-1 min-h-0 flex">
        <SheetArea />
        <Sidebar />
      </div>
      <TabsBar />
      <StatusBar />

      <div className="absolute left-[856px] top-[71px] w-[187px] h-[125px] border-[12px] border-[#5c2a7e] rounded-[18px]" />
      <div className="absolute left-[370px] top-[178px] w-[628px] h-[395px] bg-[#f0f0f0] border-[12px] border-[#5c2a7e] rounded-[22px] p-[16px] pl-[13px] pr-[13px]">
        <div className="w-full h-full bg-[#cbcbcb] border-[3px] border-[#c0c0c0] rounded-[26px] flex flex-col items-center pt-[18px]">
          <div className="w-[144px] h-[144px] shrink-0 ml-[6px]"><Grid focus /></div>
          <div className="mt-[30px] text-[100px] leading-[112px] text-[#333] whitespace-nowrap ml-[4px]">Focus Cell</div>
        </div>
      </div>
    </div>
  );
}
